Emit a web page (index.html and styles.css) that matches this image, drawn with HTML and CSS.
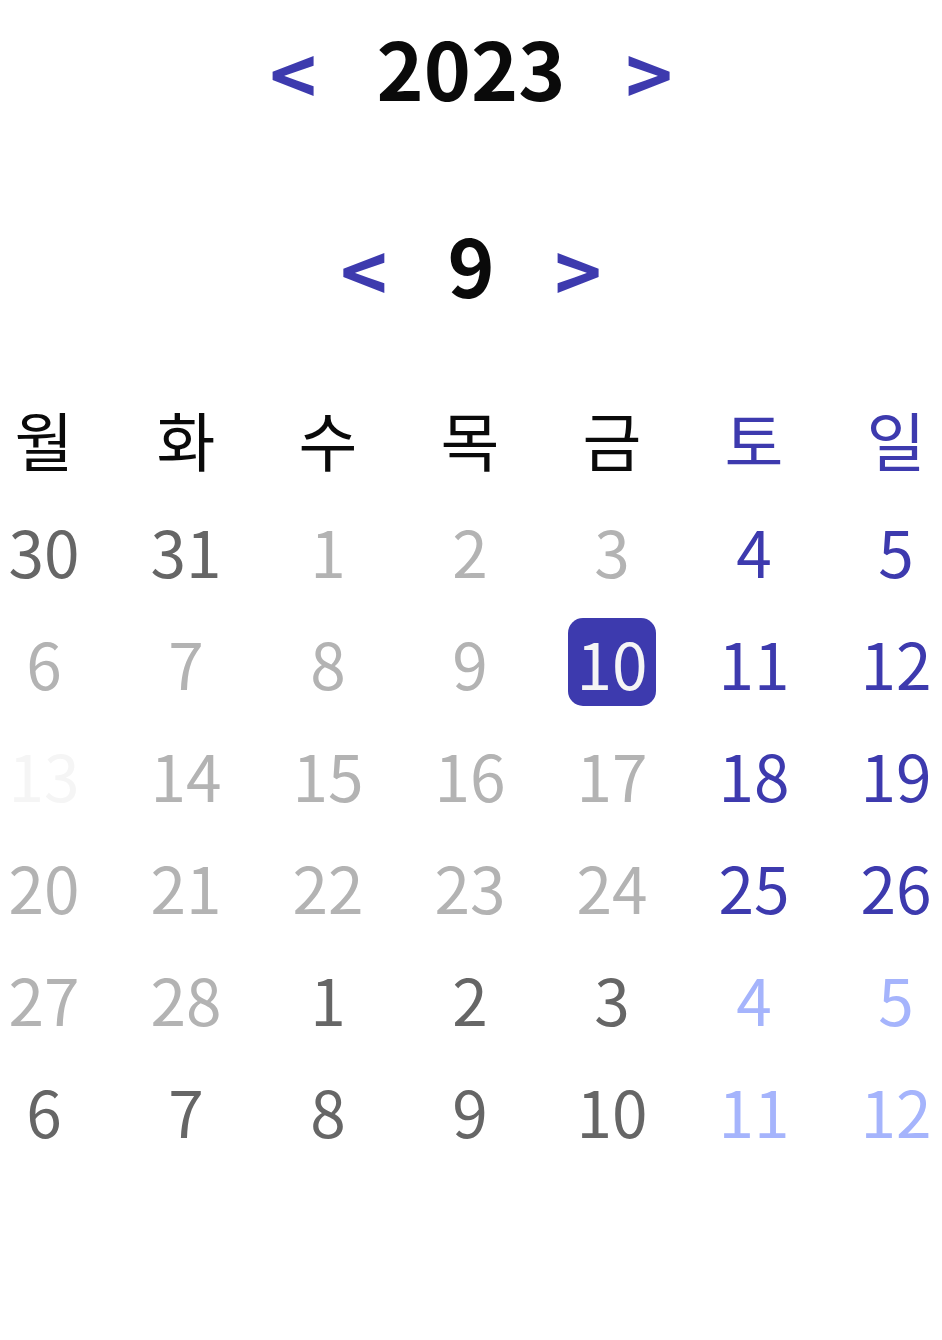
FILE: index.html
```html
<!DOCTYPE html>
<html lang="ko">
<head>
<meta charset="utf-8">
<title>Calendar</title>
<link rel="stylesheet" href="styles.css">
</head>
<body>
<div class="calendar">
  <div class="nav nav-year">
    <button class="arrow">&lt;</button>
    <span class="label">2023</span>
    <button class="arrow">&gt;</button>
  </div>
  <div class="nav nav-month">
    <button class="arrow">&lt;</button>
    <span class="label">9</span>
    <button class="arrow">&gt;</button>
  </div>
  <div class="grid">
    <div class="cell head">월</div>
    <div class="cell head">화</div>
    <div class="cell head">수</div>
    <div class="cell head">목</div>
    <div class="cell head">금</div>
    <div class="cell head weekend">토</div>
    <div class="cell head weekend">일</div>

    <div class="cell dark">30</div>
    <div class="cell dark">31</div>
    <div class="cell past">1</div>
    <div class="cell past">2</div>
    <div class="cell past">3</div>
    <div class="cell weekend">4</div>
    <div class="cell weekend">5</div>

    <div class="cell past">6</div>
    <div class="cell past">7</div>
    <div class="cell past">8</div>
    <div class="cell past">9</div>
    <div class="cell selected">10</div>
    <div class="cell weekend">11</div>
    <div class="cell weekend">12</div>

    <div class="cell faint">13</div>
    <div class="cell past">14</div>
    <div class="cell past">15</div>
    <div class="cell past">16</div>
    <div class="cell past">17</div>
    <div class="cell weekend">18</div>
    <div class="cell weekend">19</div>

    <div class="cell past">20</div>
    <div class="cell past">21</div>
    <div class="cell past">22</div>
    <div class="cell past">23</div>
    <div class="cell past">24</div>
    <div class="cell weekend">25</div>
    <div class="cell weekend">26</div>

    <div class="cell past">27</div>
    <div class="cell past">28</div>
    <div class="cell dark">1</div>
    <div class="cell dark">2</div>
    <div class="cell dark">3</div>
    <div class="cell weekend-next">4</div>
    <div class="cell weekend-next">5</div>

    <div class="cell dark">6</div>
    <div class="cell dark">7</div>
    <div class="cell dark">8</div>
    <div class="cell dark">9</div>
    <div class="cell dark">10</div>
    <div class="cell weekend-next">11</div>
    <div class="cell weekend-next">12</div>
  </div>
</div>
</body>
</html>
```

FILE: styles.css
```css
html, body {
  margin: 0;
  padding: 0;
  background: #ffffff;
}

body {
  font-family: "Noto Sans CJK KR", "Noto Sans", sans-serif;
  color: #0a0a0a;
}

.calendar {
  width: 942px;
  display: flex;
  flex-direction: column;
  align-items: center;
}

.nav {
  display: flex;
  align-items: center;
  justify-content: center;
  gap: 60px;
  font-size: 80px;
  font-weight: 700;
  line-height: 1;
}

.nav-year {
  margin-top: 26px;
  height: 80px;
}

.nav-month {
  margin-top: 117px;
  height: 80px;
}

.arrow {
  border: none;
  background: none;
  padding: 9px 0 0 0;
  margin: 0;
  font-family: inherit;
  font-size: 80px;
  font-weight: 700;
  line-height: 1;
  color: #3d3aae;
  cursor: pointer;
}

.label {
  color: #0a0a0a;
}

.grid {
  margin-top: 91px;
  align-self: flex-start;
  display: grid;
  grid-template-columns: repeat(7, 88px);
  grid-auto-rows: 88px;
  column-gap: 54px;
  row-gap: 24px;
  font-size: 64px;
  line-height: 88px;
}

.cell {
  display: flex;
  align-items: center;
  justify-content: center;
  border-radius: 15px;
  white-space: nowrap;
}

.head { color: #0a0a0a; }
.dark { color: #666666; }
.past { color: #b3b3b3; }
.faint { color: #f5f5f5; }
.weekend { color: #3d3aae; }
.weekend-next { color: #a5b4fc; }
.selected {
  background: #3d3aae;
  color: #f5f5f5;
}
```
